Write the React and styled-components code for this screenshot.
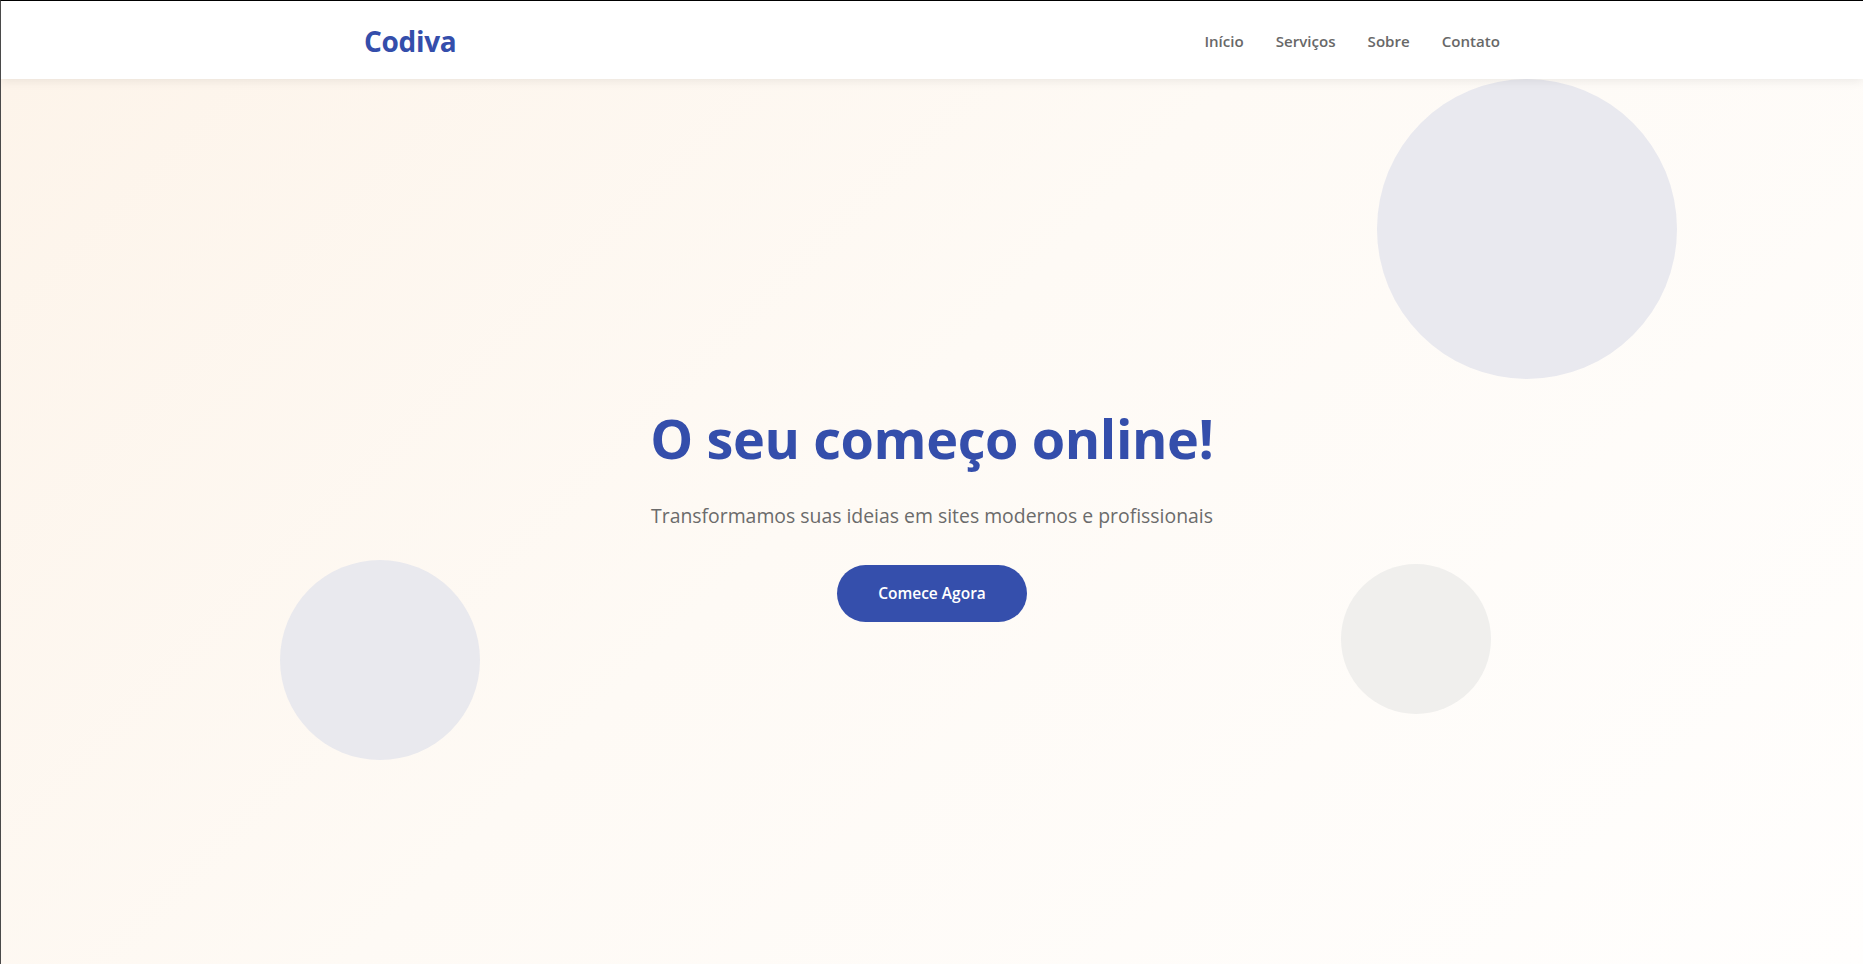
import React from 'react';
import styled, { createGlobalStyle } from 'styled-components';

const GlobalStyle = createGlobalStyle`
  *, *::before, *::after { box-sizing: border-box; margin: 0; padding: 0; }
  html, body { height: 100%; }
  body {
    font-family: "Open Sans", "Noto Sans", sans-serif;
    background: #fefcf9;
    border-top: 1px solid #000;
    border-left: 1px solid #4a4a4a;
    overflow: hidden;
  }
`;

const Page = styled.div`
  height: calc(100vh - 1px);
  display: flex;
  flex-direction: column;
`;

const Header = styled.header`
  position: relative;
  z-index: 10;
  background: #ffffff;
  box-shadow: 0 2px 10px rgba(0, 0, 0, 0.08);
`;

const Container = styled.div`
  max-width: 1200px;
  margin: 0 auto;
  padding: 0 2rem;
`;

const NavBar = styled(Container)`
  height: 78px;
  display: flex;
  align-items: center;
  justify-content: space-between;
`;

const Logo = styled.a`
  font-size: 28px;
  font-weight: 700;
  color: #344eab;
  text-decoration: none;
  letter-spacing: -0.3px;
  line-height: 1;
  padding-top: 2px;
`;

const NavList = styled.ul`
  list-style: none;
  display: flex;
  gap: 2rem;
  padding-top: 1px;
`;

const NavLink = styled.a`
  font-size: 15.1px;
  font-weight: 600;
  color: #686868;
  text-decoration: none;
`;

const Hero = styled.section`
  position: relative;
  flex: 1;
  overflow: hidden;
  background: linear-gradient(135deg, #fdf4ea 0%, #fefaf5 45%, #fffefd 100%);
  display: flex;
  flex-direction: column;
  align-items: center;
  padding-top: 327px;
`;

const Circle = styled.div`
  position: absolute;
  border-radius: 50%;
  width: ${p => p.$size}px;
  height: ${p => p.$size}px;
  top: ${p => p.$top}px;
  ${p => (p.$left ? `left: ${p.$left};` : '')}
  ${p => (p.$right ? `right: ${p.$right};` : '')}
  background: ${p => p.$color};
  z-index: 0;
`;

const Content = styled.div`
  position: relative;
  z-index: 1;
  display: flex;
  flex-direction: column;
  align-items: center;
  text-align: center;
`;

const Title = styled.h1`
  font-size: 54px;
  line-height: 1.2;
  font-weight: 700;
  color: #344eab;
  letter-spacing: -0.4px;
  margin-bottom: 29px;
`;

const Subtitle = styled.p`
  font-size: 19.4px;
  line-height: 1.6;
  color: #6b6b6b;
  margin-bottom: 34px;
`;

const Button = styled.a`
  display: inline-block;
  background: #354fac;
  color: #ffffff;
  font-size: 15.5px;
  font-weight: 600;
  line-height: 25px;
  padding: 16px 41px;
  border-radius: 50px;
  text-decoration: none;
`;

export default function App() {
  return (
    <>
      <GlobalStyle />
      <Page>
        <Header>
          <NavBar as="nav">
            <Logo href="#">Codiva</Logo>
            <NavList>
              <li><NavLink href="#">Início</NavLink></li>
              <li><NavLink href="#">Serviços</NavLink></li>
              <li><NavLink href="#">Sobre</NavLink></li>
              <li><NavLink href="#">Contato</NavLink></li>
            </NavList>
          </NavBar>
        </Header>
        <Hero>
          <Circle $size={300} $top={0} $right="10%" $color="#e9e9ef" />
          <Circle $size={200} $top={481} $left="15%" $color="#e9e9ee" />
          <Circle $size={150} $top={485} $right="20%" $color="#f0efed" />
          <Content>
            <Title>O seu começo online!</Title>
            <Subtitle>Transformamos suas ideias em sites modernos e profissionais</Subtitle>
            <Button href="#">Comece Agora</Button>
          </Content>
        </Hero>
      </Page>
    </>
  );
}
